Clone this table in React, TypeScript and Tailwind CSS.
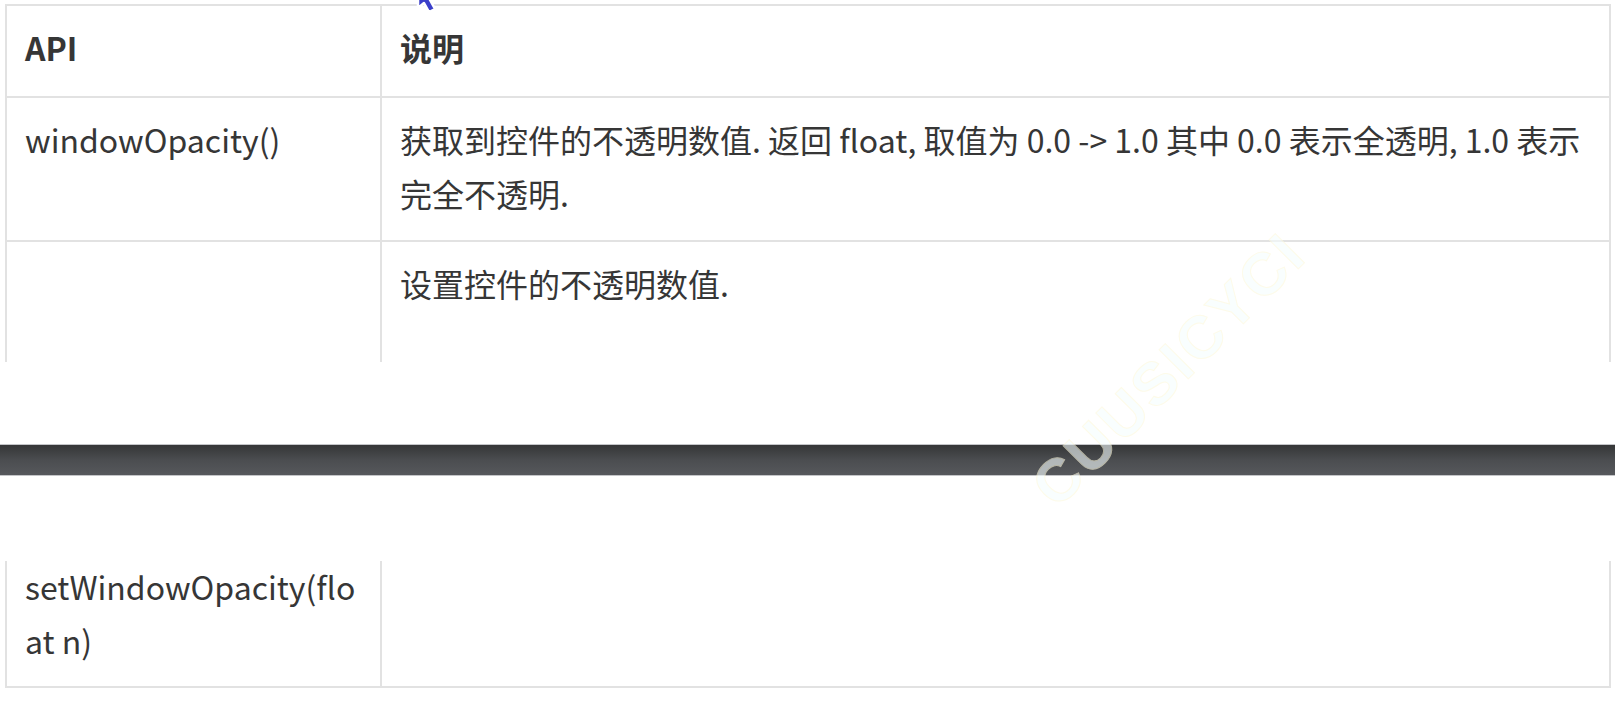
const cell = "px-[18px] text-[32px] leading-[54px] text-[#363636]";
const line = "border-[#e2e2e2]";

function Cursor() {
  return (
    <svg className="absolute left-[412px] top-[-14px]" width="40" height="30" viewBox="0 0 40 30">
      <path d="M6 2 L6 22 L12 17 L17 26 L23 23 L18 14 L27 14 Z" fill="#3b3fc9" stroke="#ffffff" strokeWidth="2.5" strokeLinejoin="round" />
    </svg>
  );
}

function Watermark() {
  return (
    <div className="absolute left-[1169px] top-[370px] -translate-x-1/2 -translate-y-1/2 -rotate-45 whitespace-nowrap font-['Liberation_Sans',sans-serif] text-[60px] font-bold tracking-[3px] text-[#f6fefe] [-webkit-text-stroke:1px_#fdf9dc] opacity-60">
      CUUSICYCI
    </div>
  );
}

export default function App() {
  return (
    <div className="relative w-[1615px] h-[703px] overflow-hidden bg-white font-['Noto_Sans_CJK_SC',sans-serif]">
      {/* 第一页表格 */}
      <div className={`ml-[5px] mt-[4px] w-[1606px] border-t-2 border-x-2 ${line}`}>
        <div className={`grid grid-cols-[375px_1fr] border-b-2 ${line}`}>
          <div className={`${cell} h-[90px] pt-[14px] font-bold border-r-2 ${line}`}>API</div>
          <div className={`${cell} h-[90px] pt-[14px] font-bold`}>说明</div>
        </div>
        <div className={`grid grid-cols-[375px_1fr] border-b-2 ${line}`}>
          <div className={`${cell} h-[142px] pt-[14px] border-r-2 ${line}`}>windowOpacity()</div>
          <div className={`${cell} h-[142px] pt-[14px] whitespace-nowrap`}>
            获取到控件的不透明数值. 返回 float, 取值为 0.0 -&gt; 1.0 其中 0.0 表示全透明, 1.0 表示
            <br />
            完全不透明.
          </div>
        </div>
        <div className="grid grid-cols-[375px_1fr]">
          <div className={`${cell} h-[120px] border-r-2 ${line}`} />
          <div className={`${cell} h-[120px] pt-[14px]`}>设置控件的不透明数值.</div>
        </div>
      </div>

      {/* 分页条 */}
      <div className="mt-[82px] h-[32px] border-y border-[#c4c5c8] bg-gradient-to-b from-[#353637] via-[#4b4d50] to-[#56585c]" />

      {/* 第二页表格 */}
      <div className={`ml-[5px] mt-[85px] w-[1606px] border-b-2 border-x-2 ${line}`}>
        <div className="grid grid-cols-[375px_1fr]">
          <div className={`${cell} h-[125px] border-r-2 ${line}`}>
            <div className="-mt-[2px]">
              setWindowOpacity(flo
              <br />
              at n)
            </div>
          </div>
          <div className={`${cell} h-[125px]`} />
        </div>
      </div>

      <Cursor />
      <Watermark />
    </div>
  );
}
